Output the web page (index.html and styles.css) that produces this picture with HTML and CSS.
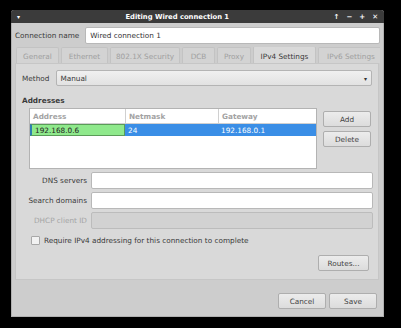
FILE: index.html
```html
<!DOCTYPE html>
<html lang="en">
<head>
    <meta charset="UTF-8">
    <title>Editing Wired connection 1</title>
    <link rel="stylesheet" href="styles.css">
</head>
<body>
    <div class="window">
        <div class="titlebar">
            <span class="menu-btn">&#9662;</span>
            <span class="title">Editing Wired connection 1</span>
            <span class="wm-btns">
                <span>&#8593;</span><span>&#8722;</span><span>+</span><span>&#10005;</span>
            </span>
        </div>
        <div class="content">
            <div class="name-row">
                <label>Connection name</label>
                <input class="entry name-entry" type="text" value="Wired connection 1">
            </div>
            <div class="tabs">
                <span class="tab off t-general">General</span>
                <span class="tab off t-eth">Ethernet</span>
                <span class="tab off t-sec">802.1X Security</span>
                <span class="tab off t-dcb">DCB</span>
                <span class="tab off t-proxy">Proxy</span>
                <span class="tab active t-ipv4">IPv4 Settings</span>
                <span class="tab off t-ipv6">IPv6 Settings</span>
            </div>
            <div class="panel">
                <div class="method-row">
                    <label>Method</label>
                    <div class="combo">Manual <span class="arrow">&#9662;</span></div>
                </div>
                <div class="section-title">Addresses</div>
                <div class="addr-area">
                    <div class="table">
                        <div class="row head">
                            <span class="c1">Address</span>
                            <span class="c2">Netmask</span>
                            <span class="c3">Gateway</span>
                        </div>
                        <div class="row sel">
                            <span class="c1 editing">192.168.0.6</span>
                            <span class="c2">24</span>
                            <span class="c3">192.168.0.1</span>
                        </div>
                    </div>
                    <div class="side-btns">
                        <button class="btn">Add</button>
                        <button class="btn">Delete</button>
                    </div>
                </div>
                <div class="form">
                    <label>DNS servers</label>
                    <input class="entry" type="text">
                    <label>Search domains</label>
                    <input class="entry" type="text">
                    <label class="off">DHCP client ID</label>
                    <input class="entry disabled" type="text" disabled>
                </div>
                <div class="check-row">
                    <span class="check"></span>
                    <span>Require IPv4 addressing for this connection to complete</span>
                </div>
                <div class="routes-row">
                    <button class="btn routes">Routes...</button>
                </div>
            </div>
            <div class="dialog-btns">
                <button class="btn">Cancel</button>
                <button class="btn">Save</button>
            </div>
        </div>
    </div>
</body>
</html>
```

FILE: styles.css
```css
* {
    box-sizing: border-box;
    margin: 0;
    padding: 0;
}

body {
    background: #000;
    font-family: 'DejaVu Sans', sans-serif;
    font-size: 7.3px;
    color: #3a3a3a;
    width: 401px;
    height: 328px;
    overflow: hidden;
}

.window {
    margin: 10px 0 0 11px;
    width: 373px;
    height: 307px;
    background: #cdcdcd;
    border-radius: 3px 3px 0 0;
    border: 1px solid #b0b0b0;
    border-top: none;
    display: flex;
    flex-direction: column;
}

.titlebar {
    height: 13px;
    background: #3b3b3b;
    color: #fff;
    display: flex;
    align-items: center;
    padding: 0 6px;
    border-radius: 3px 3px 0 0;
    margin: 0 -1px;
}

.menu-btn {
    font-size: 6px;
    width: 14px;
}

.title {
    flex: 1;
    text-align: center;
    font-weight: bold;
    font-size: 6.8px;
    padding-right: 10px;
}

.wm-btns {
    display: flex;
    gap: 7px;
    font-weight: bold;
    font-size: 7px;
}

.content {
    flex: 1;
    padding: 3px 3px 7px 3px;
    display: flex;
    flex-direction: column;
}

.name-row {
    display: flex;
    align-items: center;
    gap: 6px;
    height: 18px;
}

.entry {
    height: 17px;
    background: #fff;
    border: 1px solid #b8b8b8;
    border-radius: 2px;
    font-family: inherit;
    font-size: 7.3px;
    color: #333;
    padding: 0 4px;
    outline: none;
}

.name-entry {
    flex: 1;
}

.tabs {
    display: flex;
    gap: 2px;
    margin-top: 3px;
    height: 16px;
    padding-left: 1px;
    overflow: hidden;
    white-space: nowrap;
}

.tab {
    flex: none;
    padding-top: 4px;
    text-align: center;
    background: #d3d3d3;
    border: 1px solid #c3c3c3;
    border-bottom: none;
    border-radius: 2px 2px 0 0;
    color: #a0a0a0;
}

.t-general { width: 43px; }
.t-eth { width: 47px; }
.t-sec { width: 70px; }
.t-dcb { width: 33px; }
.t-proxy { width: 34px; }
.t-ipv4 { width: 63px; }
.t-ipv6 { width: 66px; }

.tab.active {
    background: #d9d9d9;
    color: #3a3a3a;
    margin-top: -1px;
    padding-top: 5px;
}

.panel {
    background: #d9d9d9;
    border: 1px solid #c6c6c6;
    height: 217px;
    margin-right: 1px;
    padding: 6px 6px 0;
}

.method-row {
    display: flex;
    align-items: center;
    gap: 7px;
}

.combo {
    flex: 1;
    height: 16px;
    background: linear-gradient(#f0f0f0, #e2e2e2);
    border: 1px solid #b4b4b4;
    border-radius: 2px;
    display: flex;
    align-items: center;
    justify-content: space-between;
    padding: 0 4px 0 3px;
}

.arrow {
    font-size: 6px;
    color: #333;
}

.section-title {
    font-weight: bold;
    margin: 10px 0 0;
    height: 10px;
}

.addr-area {
    display: flex;
    gap: 6px;
    padding-left: 7px;
    margin-top: 2px;
}

.table {
    width: 288px;
    height: 61px;
    background: #fff;
    border: 1px solid #b3b3b3;
}

.row {
    display: flex;
    height: 14px;
    align-items: center;
}

.row.head {
    color: #a3a3a3;
    font-weight: bold;
    border-bottom: 1px solid #d0d0d0;
    height: 15px;
}

.row span {
    padding-left: 3px;
    height: 100%;
    display: flex;
    align-items: center;
}

.head span + span {
    border-left: 1px solid #d0d0d0;
}

.c1 {
    width: 95px;
}

.c2 {
    width: 93px;
}

.c3 {
    flex: 1;
}

.row.sel {
    background: #3a8ee6;
    color: #fff;
    height: 12px;
}

.row.sel .editing {
    background: #8fe98c;
    color: #222;
    border: 1px solid #5a9c58;
    border-left: 2px solid #2f7fb0;
}

.side-btns {
    display: flex;
    flex-direction: column;
    gap: 4px;
    padding-top: 3px;
}

.btn {
    width: 48px;
    height: 16px;
    background: linear-gradient(#ececec, #dcdcdc);
    border: 1px solid #aeaeae;
    border-radius: 2px;
    font-family: inherit;
    font-size: 7.3px;
    color: #444;
}

.form {
    display: grid;
    grid-template-columns: 65px 1fr;
    column-gap: 4px;
    row-gap: 3px;
    margin-top: 3px;
}

.form label {
    text-align: right;
    align-self: center;
}

.form label.off {
    color: #a5a5a5;
}

.form .entry {
    width: 282px;
}

.entry.disabled {
    background: #d2d2d2;
    border-color: #bcbcbc;
}

.check-row {
    display: flex;
    align-items: center;
    gap: 4px;
    margin: 7px 0 0 9px;
}

.check {
    width: 9px;
    height: 9px;
    background: #f2f2f2;
    border: 1px solid #a8a8a8;
    border-radius: 1px;
}

.routes-row {
    display: flex;
    justify-content: flex-end;
    margin-top: 10px;
    padding-right: 3px;
}

.btn.routes {
    width: 51px;
}

.dialog-btns {
    display: flex;
    justify-content: flex-end;
    gap: 3px;
    margin-top: auto;
    padding-right: 3px;
}
```
